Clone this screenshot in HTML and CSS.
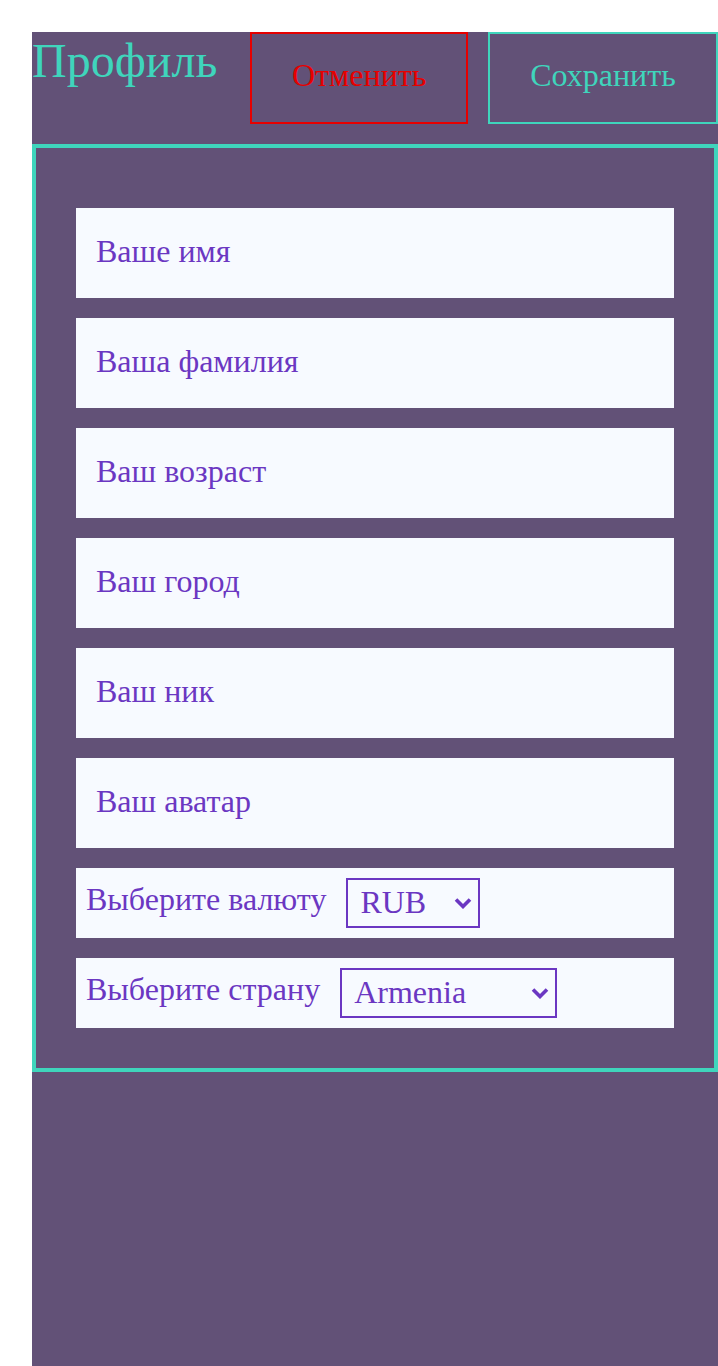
FILE: index.html
```html
<!DOCTYPE html>
<html lang="ru">
<head>
<meta charset="utf-8">
<title>Профиль</title>
<link rel="stylesheet" href="styles.css">
</head>
<body>
<div class="page">
  <header class="header">
    <h1 class="title">Профиль</h1>
    <button class="btn btn-cancel" type="button">Отменить</button>
    <button class="btn btn-save" type="button">Сохранить</button>
  </header>
  <form class="form">
    <input class="field" type="text" placeholder="Ваше имя">
    <input class="field" type="text" placeholder="Ваша фамилия">
    <input class="field" type="text" placeholder="Ваш возраст">
    <input class="field" type="text" placeholder="Ваш город">
    <input class="field" type="text" placeholder="Ваш ник">
    <input class="field" type="text" placeholder="Ваш аватар">
    <div class="row">
      <label class="row-label" for="cur">Выберите валюту</label>
      <span class="select-wrap">
        <select class="select select-cur" id="cur">
          <option>RUB</option>
          <option>USD</option>
          <option>EUR</option>
        </select>
        <svg class="chevron" width="18" height="12" viewBox="0 0 18 12" aria-hidden="true"><path d="M2 2.5 L9 9.5 L16 2.5" fill="none" stroke="#6b37c2" stroke-width="3.6" stroke-linecap="butt" stroke-linejoin="miter"/></svg>
      </span>
    </div>
    <div class="row">
      <label class="row-label" for="country">Выберите страну</label>
      <span class="select-wrap">
        <select class="select select-country" id="country">
          <option>Armenia</option>
          <option>Russia</option>
          <option>Belarus</option>
        </select>
        <svg class="chevron" width="18" height="12" viewBox="0 0 18 12" aria-hidden="true"><path d="M2 2.5 L9 9.5 L16 2.5" fill="none" stroke="#6b37c2" stroke-width="3.6" stroke-linecap="butt" stroke-linejoin="miter"/></svg>
      </span>
    </div>
  </form>
</div>
</body>
</html>
```

FILE: styles.css
```css
html, body {
  margin: 0;
  padding: 0;
  background: #ffffff;
}
body {
  padding: 32px 0 0 32px;
  font-family: "Liberation Serif", "Times New Roman", serif;
}
.page {
  background: #625177;
  min-height: 1400px;
}
.header {
  display: flex;
  align-items: flex-start;
  gap: 20px;
  margin-bottom: 20px;
}
.title {
  margin: 0 auto 0 0;
  padding-top: 1px;
  font-weight: normal;
  font-size: 48px;
  color: #3fd5bc;
  line-height: 1.15;
}
.btn {
  font-family: "Liberation Serif", "Times New Roman", serif;
  font-size: 32px;
  background: transparent;
  padding: 22px 40px 28px;
  line-height: 38px;
  height: 92px;
  box-sizing: border-box;
  margin: 0;
  cursor: pointer;
}
.btn-cancel {
  border: 2px solid #e60000;
  color: #e60000;
  width: 218px;
}
.btn-save {
  border: 2px solid #3fd5bc;
  color: #3fd5bc;
  width: 230px;
}
.form {
  border: 4px solid #3fd5bc;
  padding: 60px 40px 40px;
  display: flex;
  flex-direction: column;
  gap: 20px;
  margin: 0;
}
.field {
  height: 90px;
  box-sizing: border-box;
  border: none;
  background: #f7faff;
  padding: 0 20px 3px;
  margin: 0;
  font-family: "Liberation Serif", "Times New Roman", serif;
  font-size: 32px;
  color: #6b37c2;
  outline: none;
}
.field::placeholder {
  color: #6b37c2;
  opacity: 1;
}
.row {
  height: 70px;
  box-sizing: border-box;
  background: #f7faff;
  padding: 10px;
  display: flex;
  align-items: flex-start;
  gap: 20px;
}
.row-label {
  font-size: 32px;
  color: #6b37c2;
  line-height: 1.15;
  padding-top: 3px;
}
.select-wrap {
  position: relative;
  display: block;
}
.select {
  display: block;
  appearance: none;
  -webkit-appearance: none;
  height: 50px;
  box-sizing: border-box;
  border: 2px solid #6b37c2;
  border-radius: 0;
  background-color: #f7faff;
  color: #6b37c2;
  font-family: "Liberation Serif", "Times New Roman", serif;
  font-size: 32px;
  padding: 0 0 3px 12px;
  margin: 0;
}
.chevron {
  position: absolute;
  right: 8px;
  top: 19px;
  pointer-events: none;
}
.select-cur {
  width: 134px;
}
.select-country {
  width: 217px;
}
```
